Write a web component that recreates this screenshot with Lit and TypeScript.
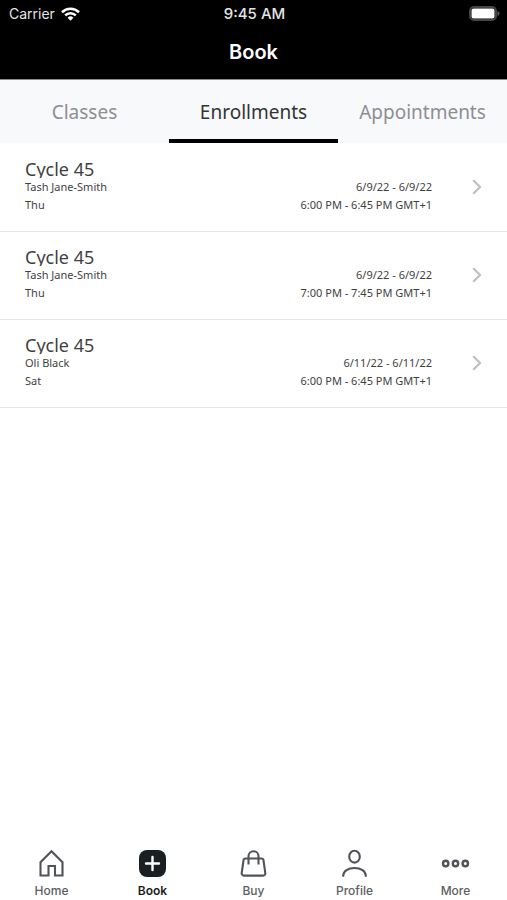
import { LitElement, html, css, svg } from "lit";
import { customElement, state } from "lit/decorators.js";
import { classMap } from "lit/directives/class-map.js";

interface Enrollment {
  title: string;
  staff: string;
  day: string;
  dates: string;
  time: string;
}

const enrollments: Enrollment[] = [
  { title: "Cycle 45", staff: "Tash Jane-Smith", day: "Thu", dates: "6/9/22 - 6/9/22", time: "6:00 PM - 6:45 PM GMT+1" },
  { title: "Cycle 45", staff: "Tash Jane-Smith", day: "Thu", dates: "6/9/22 - 6/9/22", time: "7:00 PM - 7:45 PM GMT+1" },
  { title: "Cycle 45", staff: "Oli Black", day: "Sat", dates: "6/11/22 - 6/11/22", time: "6:00 PM - 6:45 PM GMT+1" },
];

const tabs = ["Classes", "Enrollments", "Appointments"];

const navItems = [
  {
    label: "Home",
    icon: svg`<path d="M4.500 26.500V13.200L15.500 2.200l11 11V26.500h-7.500V17h-6.500v9.500z"/>`,
  },
  {
    label: "Book",
    icon: svg`<rect class="solid" x="2" y="1" width="27" height="27" rx="8"/><path class="plus" d="M15.500 8v13M9 14.500h13"/>`,
  },
  {
    label: "Buy",
    icon: svg`<path d="M7.500 9.500h16a2 2 0 0 1 2 1.800l1.800 12.800a2.200 2.200 0 0 1-2.200 2.500H5.900a2.200 2.200 0 0 1-2.200-2.500L5.500 11.300a2 2 0 0 1 2-1.800zM10.500 15.500V7.300a5 5 0 0 1 10 0v8.200"/>`,
  },
  {
    label: "Profile",
    icon: svg`<ellipse cx="15.500" cy="7.700" rx="5.300" ry="5.900"/><path d="M4.200 27.800v-1c0-5 5-7.800 11.300-7.800s11.300 2.800 11.300 7.800v1"/>`,
  },
  {
    label: "More",
    icon: svg`<g class="dots"><circle cx="5.700" cy="14.500" r="2.700"/><circle cx="15.500" cy="14.500" r="2.700"/><circle cx="25.300" cy="14.500" r="2.700"/></g>`,
  },
];

@customElement("status-bar")
export class StatusBar extends LitElement {
  static styles = css`
    :host {
      display: grid;
      grid-template-columns: 1fr auto 1fr;
      align-items: center;
      height: 28px;
      padding: 0 7px 0 9px;
      font: 400 14px/20px Inter, sans-serif;
      color: #e4e4e4;
    }
    .carrier { display: flex; align-items: center; gap: 6px; }
    .time { font-size: 15px; font-weight: 500; }
    .battery { justify-self: end; }
    svg { display: block; margin-bottom: 1px; }
  `;

  render() {
    return html`
      <div class="carrier">
        <span>Carrier</span>
        <svg width="19" height="14" viewBox="0 0 19 14" fill="none" stroke="#fff" stroke-width="2.600" aria-label="Wi-Fi">
          <path d="M1 5.200a12.200 12.200 0 0 1 17 0" />
          <path d="M4.200 8.400a7.600 7.600 0 0 1 10.600 0" />
          <path d="M9.500 13.700L6.600 10.800a4.100 4.100 0 0 1 5.800 0z" fill="#fff" stroke="none" />
        </svg>
      </div>
      <span class="time">9:45 AM</span>
      <svg class="battery" width="31" height="15" viewBox="0 0 31 15" aria-label="Battery">
        <rect x="1" y="1" width="26" height="13" rx="4" fill="none" stroke="#464646" stroke-width="2" />
        <rect x="2.500" y="2.500" width="23" height="10" rx="2" fill="#fff" />
        <path d="M28.500 5v5c1.300-.5 2-1.400 2-2.500s-.7-2-2-2.500z" fill="#5c5c5c" />
      </svg>
    `;
  }
}

@customElement("app-root")
export class AppRoot extends LitElement {
  @state() private activeTab = "Enrollments";
  @state() private activeNav = "Book";

  static styles = css`
    :host {
      display: flex;
      flex-direction: column;
      min-height: 100vh;
      background: #fff;
      color: #3f3f42;
      font-family: "Noto Sans", sans-serif;
    }
    * { box-sizing: border-box; }
    button { border: 0; margin: 0; padding: 0; background: none; cursor: pointer; }
    header { background: #000; border-bottom: 1px solid #8a8a8a; }
    h1 {
      margin: 0;
      padding: 12px 0 15px;
      text-align: center;
      color: #fff;
      font: 600 20px/24px Inter, sans-serif;
    }
    .tabs { display: grid; grid-template-columns: repeat(3, 1fr); background: #f8f9fb; }
    .tab {
      height: 63px;
      border-bottom: 4px solid transparent;
      padding-top: 4px;
      font: 400 19px/28px "Noto Sans", sans-serif;
      color: #8e8e93;
    }
    .tab.active { color: #333336; border-bottom-color: #000; }
    main { flex: 1; }
    ul { list-style: none; margin: 0; padding: 1px 0 0; }
    .row {
      display: grid;
      grid-template-columns: 1fr auto 50px;
      border-bottom: 1px solid #e4e4e6;
      padding: 16px 25px 17px;
      color: inherit;
      text-decoration: none;
      font-size: 11px;
      line-height: 18px;
    }
    h2 { margin: 0; font-size: 18px; line-height: 18px; font-weight: 400; overflow: hidden; }
    p { margin: 0; }
    .when { align-self: end; text-align: right; }
    .chevron { display: block; align-self: center; justify-self: end; }
    nav {
      position: sticky;
      bottom: 0;
      display: grid;
      grid-template-columns: repeat(5, 1fr);
      padding: 0 1px 1px;
      background: #fff;
    }
    .nav-item {
      display: flex;
      flex-direction: column;
      align-items: center;
      gap: 5px;
      font: 500 12px/16px Inter, sans-serif;
      color: #5c5e62;
    }
    .nav-item.active { color: #1c1d20; font-weight: 600; }
    .nav-icon { display: block; fill: none; stroke: #505358; stroke-width: 2.1; }
    .nav-icon .solid { fill: #1c1f22; stroke: none; }
    .nav-icon .plus { stroke: #fff; stroke-width: 2.4; stroke-linecap: round; }
    .nav-icon .dots { stroke-width: 2.4; }
  `;

  render() {
    return html`
      <header>
        <status-bar></status-bar>
        <h1>Book</h1>
      </header>
      <div class="tabs" role="tablist">
        ${tabs.map(
          (tab) => html`<button
            role="tab"
            aria-selected=${tab === this.activeTab}
            class=${classMap({ tab: true, active: tab === this.activeTab })}
            @click=${() => (this.activeTab = tab)}
          >${tab}</button>`
        )}
      </div>
      <main>
        <ul>
          ${enrollments.map(
            (item) => html`<li>
              <a class="row" href="#">
                <div>
                  <h2>${item.title}</h2>
                  <p>${item.staff}</p>
                  <p>${item.day}</p>
                </div>
                <div class="when">
                  <p>${item.dates}</p>
                  <p>${item.time}</p>
                </div>
                <svg class="chevron" width="10" height="16" viewBox="0 0 10 16" fill="none" stroke="#bfbfc2" stroke-width="2.200" aria-hidden="true">
                  <path d="M1.200 1.200L8 8l-6.800 6.800" />
                </svg>
              </a>
            </li>`
          )}
        </ul>
      </main>
      <nav>
        ${navItems.map(
          (item) => html`<button
            class=${classMap({ "nav-item": true, active: item.label === this.activeNav })}
            @click=${() => (this.activeNav = item.label)}
          >
            <svg class="nav-icon" width="31" height="29" viewBox="0 0 31 29" aria-hidden="true">${item.icon}</svg>
            <span>${item.label}</span>
          </button>`
        )}
      </nav>
    `;
  }
}
